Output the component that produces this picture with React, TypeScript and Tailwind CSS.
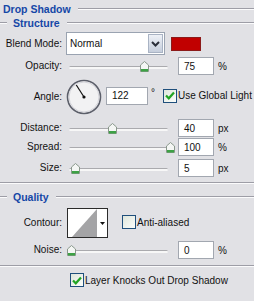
import React from "react"

const font = { fontFamily: '"Liberation Sans", Arial, sans-serif' }

function Heading(props: any) {
  return (
    <div className={"flex items-center " + props.className}>
      {props.indent && <Etch className="w-[7px]" />}
      <span className={"text-[10.5px] font-bold text-[#1547a7] leading-none " + (props.indent ? "ml-[6px]" : "ml-[3px]")}>
        {props.children}
      </span>
      <Etch className="flex-1 ml-[7px]" />
    </div>
  )
}

function Etch(props: any) {
  return (
    <div className={props.className}>
      <div className="h-[1px] bg-[#9d9da6]" />
      <div className="h-[1px] bg-[#fbfbfc]" />
    </div>
  )
}

function Label(props: any) {
  return <div className="w-[62px] shrink-0 text-right text-[10px] text-[#111] leading-none">{props.children}</div>
}

function Box(props: any) {
  return (
    <div className={"h-[18px] bg-white border border-[#a2a7b0] flex items-center pl-[5px] text-[10px] text-[#111] " + props.className}>
      {props.children}
    </div>
  )
}

function Slider(props: any) {
  return (
    <div className="relative w-[99px] h-[18px] ml-[7px] shrink-0">
      <div className="absolute left-0 right-0 top-[9px] h-[3px] rounded-full bg-[#f7f7f7] border-t border-[#aaaaae]" />
      <svg className="absolute top-[4px]" style={{ left: props.x - 4 }} width="9" height="11" viewBox="0 0 9 11">
        <path d="M4.5 0.5 L8.5 4 L8.5 10.5 L0.5 10.5 L0.5 4 Z" fill="#f4f6f4" stroke="#8a988c" />
        <rect x="1" y="8" width="7" height="2.5" fill="#3da145" />
      </svg>
    </div>
  )
}

function SliderRow(props: any) {
  return (
    <div className={"flex items-center h-[18px] " + props.className}>
      <Label>{props.label}</Label>
      <Slider x={props.x} />
      <Box className="w-[36px] ml-[10px]">{props.value}</Box>
      <span className="ml-[4px] text-[10px] text-[#111]">{props.unit}</span>
    </div>
  )
}

function Check(props: any) {
  return (
    <div className="w-[14px] h-[14px] border border-[#1f4f7c] bg-gradient-to-br from-[#dfe6dc] to-[#fbfdfb] flex items-center justify-center shrink-0">
      {props.checked && (
        <svg width="10" height="9" viewBox="0 0 10 9">
          <path d="M1 4.5 L3.8 7.3 L9 1.5" fill="none" stroke="#22a424" strokeWidth="2.2" />
        </svg>
      )}
    </div>
  )
}

export default function App() {
  return (
    <div className="w-[254px] h-[301px] bg-[#e1e1e5] overflow-hidden flex flex-col" style={font}>
      <Heading className="h-[18px]">Drop Shadow</Heading>
      <Heading className="h-[10px]" indent>Structure</Heading>

      <div className="flex items-center h-[23px] mt-[4px]">
        <div className="w-[62px] shrink-0 text-right text-[10px] text-[#111] leading-none">Blend Mode:</div>
        <div className="ml-[4px] w-[99px] h-[23px] bg-white border border-[#9aa3b1] flex items-center justify-between">
          <span className="pl-[3px] text-[10px] text-[#111]">Normal</span>
          <div className="w-[15px] h-[19px] mr-[1px] bg-gradient-to-b from-[#eef1f7] to-[#c6cedc] border border-[#a9b3c4] flex items-center justify-center">
            <svg width="9" height="6" viewBox="0 0 9 6">
              <path d="M1 1 L4.5 4.5 L8 1" fill="none" stroke="#2a2f3a" strokeWidth="2" />
            </svg>
          </div>
        </div>
        <div className="ml-[6px] w-[30px] h-[14px] bg-[#c10000] border border-[#8c1a1a]" />
      </div>

      <SliderRow className="mt-[2px]" label="Opacity:" x={75} value="75" unit="%" />

      <div className="flex items-center h-[35px] mt-[4px]">
        <Label>Angle:</Label>
        <div className="ml-[4px] w-[36px] h-[36px] shrink-0">
          <svg width="36" height="36" viewBox="0 0 36 36">
            <circle cx="18" cy="18" r="16.5" fill="#f2f2f3" stroke="#5c5f6a" strokeWidth="1.6" />
            <circle cx="18" cy="18" r="15" fill="none" stroke="#d4d4da" strokeWidth="1" />
            <line x1="18" y1="18" x2="10.3" y2="6" stroke="#111" strokeWidth="1.2" />
            <circle cx="18" cy="18" r="1.6" fill="#111" />
          </svg>
        </div>
        <Box className="w-[42px] h-[17px] ml-[4px] mb-[2px]">122</Box>
        <span className="ml-[3px] mb-[9px] text-[10px] text-[#111]">°</span>
        <div className="ml-[8px] mb-[2px] flex items-center">
          <Check checked />
          <span className="ml-[1px] text-[10px] text-[#111]">Use Global Light</span>
        </div>
      </div>

      <SliderRow className="mt-[5px]" label="Distance:" x={43} value="40" unit="px" />
      <SliderRow className="mt-[1px]" label="Spread:" x={101} value="100" unit="%" />
      <SliderRow className="mt-[3px]" label="Size:" x={6} value="5" unit="px" />

      <Etch className="mt-[5px]" />

      <Heading className="h-[12px] mt-[7px]" indent>Quality</Heading>

      <div className="flex items-center h-[30px] mt-[5px]">
        <Label>Contour:</Label>
        <div className="ml-[5px] w-[41px] h-[30px] border border-[#2b2b2b] bg-white flex shrink-0">
          <svg width="29" height="28" viewBox="0 0 29 28">
            <polygon points="4,28 29,0 29,28" fill="#a4a4a6" />
          </svg>
          <div className="flex-1 flex items-center justify-center">
            <svg width="5" height="3" viewBox="0 0 5 3">
              <polygon points="0,0 5,0 2.5,3" fill="#111" />
            </svg>
          </div>
        </div>
        <div className="ml-[14px] mb-[2px] flex items-center">
          <Check />
          <span className="ml-[1px] text-[10px] text-[#111]">Anti-aliased</span>
        </div>
      </div>

      <SliderRow className="mt-[3px]" label="Noise:" x={2} value="0" unit="%" />

      <Etch className="mt-[6px]" />

      <div className="flex items-center h-[14px] mt-[6px] pl-[70px]">
        <Check checked />
        <span className="ml-[1px] text-[10px] text-[#111]">Layer Knocks Out Drop Shadow</span>
      </div>
    </div>
  )
}
